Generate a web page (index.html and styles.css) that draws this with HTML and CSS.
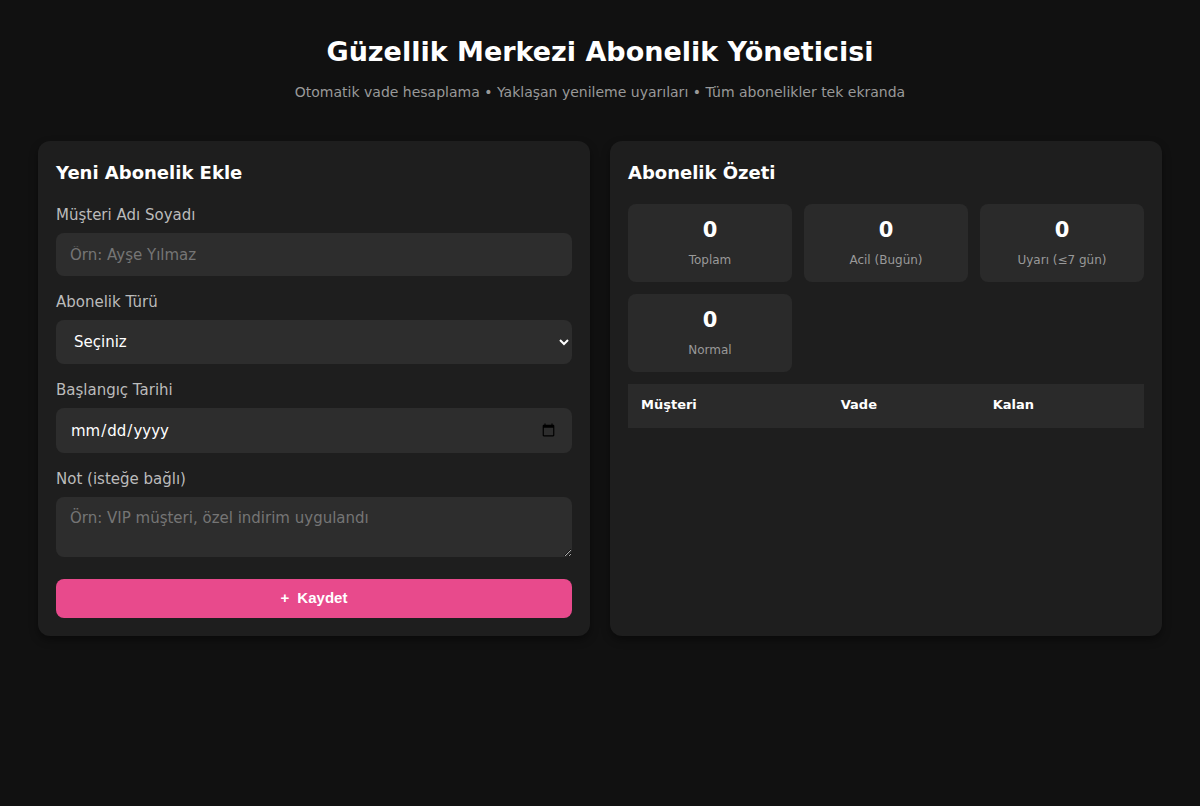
FILE: index.html
```html
<!DOCTYPE html>
<html lang="tr">
<head>
<meta charset="utf-8">
<meta name="viewport" content="width=device-width, initial-scale=1">
<title>Güzellik Merkezi Abonelik Yöneticisi</title>
<link rel="stylesheet" href="styles.css">
</head>
<body>
<header class="header">
  <h1 class="title">Güzellik Merkezi Abonelik Yöneticisi</h1>
  <p class="subtitle">Otomatik vade hesaplama • Yaklaşan yenileme uyarıları • Tüm abonelikler tek ekranda</p>
</header>
<main class="grid">
  <section class="card">
    <h2 class="card-title">Yeni Abonelik Ekle</h2>
    <form class="form">
      <label class="label" for="name">Müşteri Adı Soyadı</label>
      <input class="field field-name" id="name" type="text" placeholder="Örn: Ayşe Yılmaz">
      <label class="label" for="type">Abonelik Türü</label>
      <select class="field field-type" id="type"><option>Seçiniz</option></select>
      <label class="label" for="start">Başlangıç Tarihi</label>
      <input class="field field-date" id="start" type="date">
      <label class="label" for="note">Not (isteğe bağlı)</label>
      <textarea class="field field-note" id="note" rows="2" placeholder="Örn: VIP müşteri, özel indirim uygulandı"></textarea>
      <button class="save" type="button"><span>+</span><span>Kaydet</span></button>
    </form>
  </section>
  <section class="card">
    <h2 class="card-title">Abonelik Özeti</h2>
    <div class="stats">
      <div class="stat"><div class="num">0</div><div class="cap">Toplam</div></div>
      <div class="stat"><div class="num">0</div><div class="cap">Acil (Bugün)</div></div>
      <div class="stat"><div class="num">0</div><div class="cap">Uyarı (≤7 gün)</div></div>
      <div class="stat"><div class="num">0</div><div class="cap">Normal</div></div>
    </div>
    <table class="table">
      <thead><tr><th>Müşteri</th><th>Vade</th><th>Kalan</th></tr></thead>
    </table>
  </section>
</main>
</body>
</html>
```
FILE: styles.css
```css
* { box-sizing: border-box; }
body {
  margin: 0;
  padding: 32px 38px;
  background: #111;
  color: #fff;
  font-family: "DejaVu Sans", sans-serif;
}
.header { text-align: center; margin-bottom: 39px; }
.title { margin: 0 0 11px; font-size: 27px; line-height: 40px; }
.subtitle { margin: 0; font-size: 14px; line-height: 19px; color: #999; }
.grid { display: grid; grid-template-columns: 1fr 1fr; gap: 20px; }
.card {
  padding: 18px;
  border-radius: 12px;
  background: #1e1e1e;
  box-shadow: 0 4px 8px rgba(0, 0, 0, 0.4);
}
.card-title { margin: 0 0 18px; font-size: 18px; line-height: 27px; }
.form { display: flex; flex-direction: column; }
.label { margin-bottom: 7px; font-size: 15px; line-height: 22px; color: #bbb; }
.field {
  width: 100%;
  margin: 0 0 15px;
  padding: 12px 14px;
  border: 0;
  border-radius: 8px;
  background: #2d2d2d;
  color: #fff;
  font-family: inherit;
  font-size: 15px;
}
.field::placeholder { color: #757575; }
.field-name { height: 43px; }
.field-type { height: 44px; }
.field-date { height: 45px; }
.field-note { height: 60px; margin-bottom: 22px; resize: vertical; }
.save {
  display: flex;
  justify-content: center;
  gap: 8px;
  padding: 9px 10px 11px;
  border: 0;
  border-radius: 8px;
  background: #e84a8c;
  color: #fff;
  font: bold 15px/19px "Liberation Sans", sans-serif;
}
.stats { display: grid; grid-template-columns: repeat(3, 1fr); gap: 12px; margin-bottom: 12px; }
.stat { padding: 12px 12px 13px; border-radius: 8px; background: #2a2a2a; text-align: center; }
.num { font-size: 21px; font-weight: bold; line-height: 28px; }
.cap { margin-top: 7px; font-size: 12px; line-height: 18px; color: #999; }
.table { width: 100%; border-collapse: collapse; font-size: 13px; }
.table th { padding: 11px 13px 13px; background: #2a2a2a; text-align: left; line-height: 20px; }
```
